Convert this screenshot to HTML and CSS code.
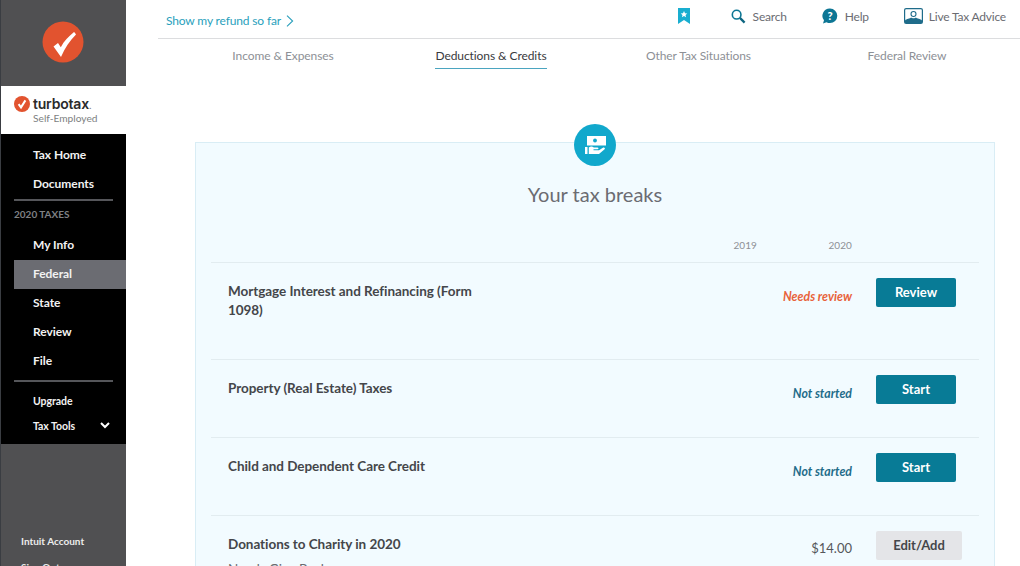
FILE: index.html
```html
<!DOCTYPE html>
<html lang="en">
<head>
  <meta charset="UTF-8" />
  <meta name="viewport" content="width=device-width, initial-scale=1.0"/>
  <title>TurboTax Self-Employed</title>
  <link rel="stylesheet" href="styles.css">
</head>
<body>

<div class="app">
  <aside class="sidebar">
    <div class="side-top">
      <svg class="badge-big" viewBox="0 0 42 42" width="42" height="42">
        <circle cx="21" cy="21" r="20.5" fill="#e2532f"/>
        <path d="M11.500 25.500l4.500-3.500 2.800 4.200C22 20 26.500 15.500 32 11c.8.500 1.300 1.200 2 2.500C27.500 20 23 27 19 36z" fill="#fff"/>
      </svg>
    </div>
    <div class="side-brand">
      <div class="brand-row">
        <svg viewBox="0 0 16 16" width="16" height="16">
          <circle cx="8" cy="8" r="8" fill="#e2532f"/>
          <path d="M4.600 8.200l2.400 3.200 4.400-7" fill="none" stroke="#fff" stroke-width="2"/>
        </svg>
        <span class="brand-name">turbotax<span class="brand-dot">.</span></span>
      </div>
      <div class="brand-sub">Self-Employed</div>
    </div>
    <nav class="side-nav">
      <a class="nav-item">Tax Home</a>
      <a class="nav-item">Documents</a>
      <div class="nav-sep"></div>
      <div class="nav-title">2020 TAXES</div>
      <a class="nav-item">My Info</a>
      <a class="nav-item active">Federal</a>
      <a class="nav-item">State</a>
      <a class="nav-item">Review</a>
      <a class="nav-item">File</a>
      <div class="nav-sep sep-low"></div>
      <a class="nav-item small">Upgrade</a>
      <a class="nav-item small tools">Tax Tools
        <svg viewBox="0 0 10 7" width="10" height="7"><path d="M1 1l4 4 4-4" fill="none" stroke="#fff" stroke-width="2"/></svg>
      </a>
    </nav>
    <div class="side-bottom">
      <a>Intuit Account</a>
      <a>Sign Out</a>
    </div>
  </aside>

  <main class="main">
    <header class="topbar">
      <a class="refund">Show my refund so far
        <svg viewBox="0 0 8 12" width="8" height="12"><path d="M1 .7L6.600 6 1 11.300" fill="none" stroke="#2a9fbc" stroke-width="1.100"/></svg>
      </a>
      <div class="tools-row">
        <svg class="bookmark" viewBox="0 0 12 16" width="12" height="16">
          <path d="M0 0h12v16L6 12 0 16z" fill="#19aed0"/>
          <path d="M6 3l1 2.200 2.300.2-1.800 1.500.6 2.300L6 7.900 3.900 9.200l.6-2.300L2.700 5.400 5 5.200z" fill="#fff"/>
        </svg>
        <a class="tool tool-search">
          <svg viewBox="0 0 16 16" width="15" height="15"><circle cx="6" cy="6" r="4.600" fill="none" stroke="#0d7694" stroke-width="1.700"/><path d="M9.500 9.500l5 5" stroke="#0d6580" stroke-width="2.400"/></svg>
          Search
        </a>
        <a class="tool tool-help">
          <svg viewBox="0 0 16 16" width="16" height="16"><path d="M8 .5a7.300 7.300 0 0 1 0 14.600c-1.300 0-2.500-.3-3.500-.9L1 15.500l1-3.200A7.300 7.300 0 0 1 8 .5z" fill="#0d7694"/><text x="8" y="12" text-anchor="middle" class="help-q">?</text></svg>
          Help
        </a>
        <a class="tool tool-live">
          <svg viewBox="0 0 19 16" width="19" height="16"><rect x=".6" y=".6" width="17.800" height="14.800" rx="1.500" fill="#fff" stroke="#1f6c8a" stroke-width="1.200"/><circle cx="9.500" cy="6" r="2.500" fill="none" stroke="#1f6c8a" stroke-width="1.100"/><path d="M1 15v-2.500c1.500-2 5-1.500 6-3 1 1 4 1 5 0 1 1.500 4.500 1 6 3V15z" fill="#1f6c8a"/></svg>
          Live Tax Advice
        </a>
      </div>
    </header>

    <div class="tabs">
      <a class="tab">Income &amp; Expenses</a>
      <a class="tab current">Deductions &amp; Credits</a>
      <a class="tab">Other Tax Situations</a>
      <a class="tab">Federal Review</a>
    </div>

    <section class="card">
      <div class="card-icon">
        <svg viewBox="0 0 21 18" width="21" height="18">
          <path d="M2 0h19v9.500H2z" fill="#fff"/>
          <circle cx="10" cy="4.500" r="1.900" fill="#11a8cc"/>
          <path d="M0 11h2.500v7H0zM3.800 11.500c1.800-1.200 3.500-1.200 5 0h3.700c1.300 0 1.300 1.800 0 1.800H8.500v1h5.500l4.300-2.800c1.300-.4 2.200.9 1.300 1.800L14 18H3.800z" fill="#fff"/>
        </svg>
      </div>
      <h1>Your tax breaks</h1>
      <div class="years">
        <span>2019</span>
        <span>2020</span>
      </div>

      <div class="row row-tall">
        <div class="row-name">Mortgage Interest and Refinancing (Form 1098)</div>
        <div class="row-status warn">Needs review</div>
        <div class="row-action"><button class="btn">Review</button></div>
      </div>
      <div class="row">
        <div class="row-name">Property (Real Estate) Taxes</div>
        <div class="row-status">Not started</div>
        <div class="row-action"><button class="btn">Start</button></div>
      </div>
      <div class="row">
        <div class="row-name">Child and Dependent Care Credit</div>
        <div class="row-status">Not started</div>
        <div class="row-action"><button class="btn">Start</button></div>
      </div>
      <div class="row">
        <div class="row-name">Donations to Charity in 2020
          <div class="row-note">Needs Give Back</div>
        </div>
        <div class="row-amount">$14.00</div>
        <div class="row-action"><button class="btn btn-grey">Edit/Add</button></div>
      </div>
    </section>
  </main>
</div>

</body>
</html>
```

FILE: styles.css
```css
html, body {
  margin: 0;
  padding: 0;
  height: 566px;
  overflow: hidden;
  background: #fff;
  font-family: 'Lato', 'Open Sans', sans-serif;
  color: #393a3d;
}
a {
  cursor: pointer;
}
.app {
  display: flex;
  height: 566px;
  overflow: hidden;
}

/* sidebar */
.sidebar {
  width: 125px;
  flex: none;
  display: flex;
  flex-direction: column;
  border-left: 1px solid #3a3d42;
  background: #505052;
  overflow: hidden;
}
.side-top {
  height: 86px;
  flex: none;
  display: flex;
  align-items: center;
  justify-content: center;
  padding: 0 2px 2px 0;
  box-sizing: border-box;
}
.side-brand {
  height: 48px;
  flex: none;
  background: #fff;
  box-sizing: border-box;
  padding: 9px 0 0 13px;
}
.brand-row {
  display: flex;
  align-items: center;
  gap: 3px;
  height: 17px;
}
.brand-name {
  font-family: 'Inter', sans-serif;
  font-size: 14px;
  font-weight: 600;
  letter-spacing: -0.2px;
  color: #2b2b2b;
}
.brand-dot {
  color: #888;
  font-size: 8px;
}
.brand-sub {
  margin: 0 0 0 19px;
  font-size: 10.2px;
  line-height: 12px;
  color: #7d7f82;
}
.side-nav {
  height: 310px;
  flex: none;
  background: #000;
  box-sizing: border-box;
  padding-top: 7px;
}
.nav-item {
  display: flex;
  align-items: center;
  height: 29px;
  box-sizing: border-box;
  margin-left: 13px;
  padding: 0 0 2px 19px;
  font-size: 12px;
  font-weight: 700;
  letter-spacing: -0.05px;
  color: #f2f2f2;
}
.nav-item.active {
  background: #6b6c72;
}
.nav-item.small {
  height: 25px;
  font-size: 10.5px;
}
.tools {
  justify-content: space-between;
  padding-right: 16px;
}
.nav-sep {
  height: 2px;
  margin: 0 13px;
  background: #55565a;
}
.sep-low {
  margin-top: 4px;
  margin-bottom: 7px;
}
.nav-title {
  margin: 7px 0 8px 13px;
  height: 15px;
  line-height: 13px;
  font-size: 10px;
  font-weight: 700;
  color: #7f8184;
}
.side-bottom {
  flex: 1;
  display: flex;
  flex-direction: column;
  gap: 14px;
  padding: 91px 0 0 20px;
  font-size: 10px;
  font-weight: 700;
  color: #ececec;
}

/* main area */
.main {
  flex: 1;
  min-width: 0;
}
.topbar {
  display: flex;
  align-items: center;
  justify-content: space-between;
  height: 38px;
  margin-left: 32px;
  padding: 0 14px 0 8px;
  border-bottom: 1px solid #dcdddf;
}
.refund {
  display: flex;
  align-items: center;
  gap: 5px;
  margin-top: 3px;
  font-size: 12px;
  color: #2a9fbc;
  letter-spacing: -0.15px;
}
.tools-row {
  display: flex;
  align-items: center;
  margin-bottom: 6px;
  font-size: 12px;
  color: #6b6c72;
}
.bookmark {
  margin-right: 41px;
}
.tool {
  display: flex;
  align-items: center;
  gap: 7px;
  letter-spacing: -0.2px;
}
.tool-live {
  gap: 6px;
}
.tool-search {
  margin-right: 35px;
}
.tool-help {
  margin-right: 35px;
}
.help-q {
  font-size: 11px;
  font-weight: 900;
  fill: #fff;
}
.tabs {
  display: grid;
  grid-template-columns: 206px 210px 205px 212px;
  justify-items: center;
  margin-left: 54px;
  height: 31px;
  font-size: 12px;
  letter-spacing: -0.08px;
  color: #8d9096;
}
.tab {
  height: 23px;
  line-height: 21px;
  margin-top: 6px;
}
.tab.current {
  color: #393a3d;
  border-bottom: 1px solid #4ba5c0;
}

.card {
  position: relative;
  margin: 72px 25px 0 69px;
  height: 500px;
  padding: 0 15px;
  background: #f2fbff;
  border: 1px solid #d9edf5;
  box-sizing: border-box;
}
.card-icon {
  position: absolute;
  top: -19px;
  left: 378px;
  width: 42px;
  height: 42px;
  border-radius: 50%;
  background: #11a8cc;
  display: flex;
  align-items: center;
  justify-content: center;
}
.card h1 {
  margin: 0;
  padding-top: 38px;
  height: 26px;
  line-height: 26px;
  text-align: center;
  font-size: 20px;
  font-weight: 400;
  color: #6b6c72;
}
.years {
  display: flex;
  justify-content: flex-end;
  padding: 32px 127px 0 0;
  height: 23px;
  font-size: 10px;
  letter-spacing: 0.1px;
  color: #8d9096;
}
.years span {
  width: 95px;
  text-align: right;
}
.row {
  display: flex;
  height: 77px;
  border-top: 1px solid #e2ecf0;
  padding: 0 23px 0 17px;
}
.row-tall {
  height: 96px;
}
.row-name {
  width: 270px;
  padding-top: 19px;
  font-size: 13.5px;
  line-height: 19px;
  font-weight: 700;
  letter-spacing: -0.05px;
  color: #44464a;
}
.row-note {
  margin-top: 6px;
  font-weight: 400;
  color: #6b6c72;
}
.row-status {
  margin-left: auto;
  padding-top: 26px;
  font-size: 12.3px;
  line-height: 16px;
  font-weight: 700;
  font-style: italic;
  color: #1f6c8a;
}
.row-status.warn {
  color: #e8623a;
}
.row-amount {
  margin-left: auto;
  padding-top: 23px;
  font-size: 13px;
  line-height: 18px;
  color: #55575b;
}
.row-action {
  width: 104px;
  flex: none;
  padding-top: 15px;
  padding-left: 24px;
  box-sizing: border-box;
}
.btn {
  width: 80px;
  height: 29px;
  padding: 0 0 2px;
  border: none;
  border-radius: 2px;
  background: #087b96;
  color: #fff;
  font-family: inherit;
  font-size: 13px;
  font-weight: 700;
}
.btn-grey {
  width: 86px;
  background: #e4e5e8;
  color: #44464a;
}
```
